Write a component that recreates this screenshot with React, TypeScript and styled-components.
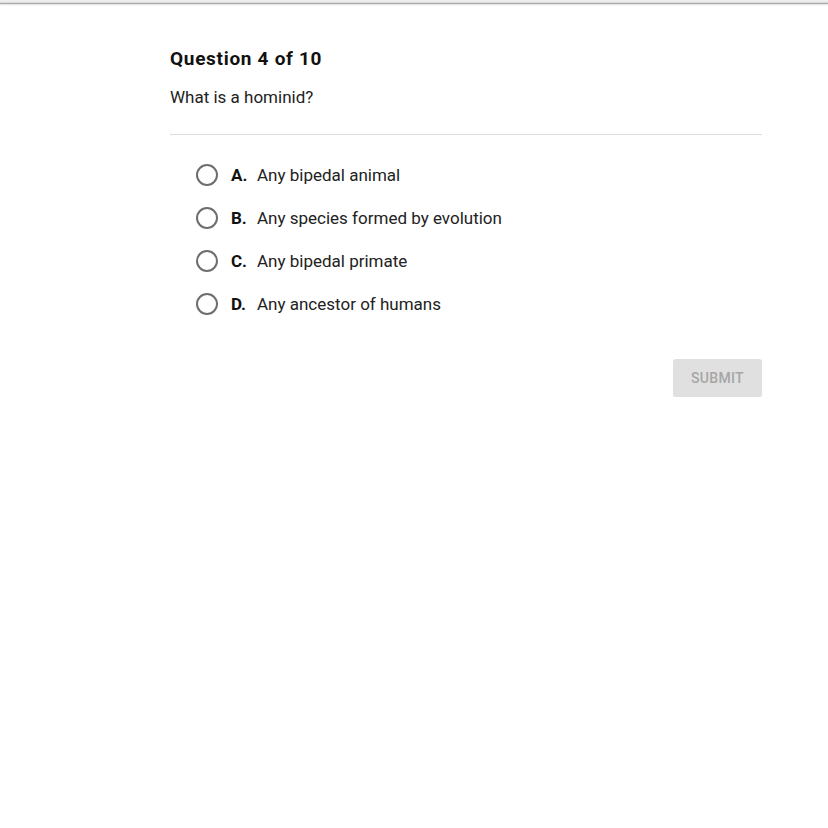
import styled, { createGlobalStyle } from 'styled-components';

const GlobalStyle = createGlobalStyle`
  html, body {
    margin: 0;
    padding: 0;
    background: #ffffff;
    font-family: Roboto, "Liberation Sans", Arial, sans-serif;
    color: #222222;
  }
`;

const STopBar = styled.div`
  height: 3px;
  background: linear-gradient(#f4f4f4, #dcdcdc);
  border-bottom: 1px solid #a8a8a8;
  box-shadow: 0 1px 2px rgba(0, 0, 0, 0.12);
`;

const SPage = styled.main`
  margin: 0 66px 0 170px;
  padding-top: 41px;
  display: flex;
  flex-direction: column;
`;

const STitle = styled.h2`
  margin: 0;
  font-size: 19px;
  font-weight: 700;
  letter-spacing: 0.7px;
  line-height: 28px;
  color: #111111;
`;

const SPrompt = styled.p`
  margin: 12px 0 0;
  font-size: 17px;
  line-height: 24px;
  color: #222222;
`;

const SDivider = styled.hr`
  margin: 25px 0 0;
  border: none;
  border-top: 1px solid #dcdcdc;
`;

const SOptions = styled.ul`
  list-style: none;
  margin: 29px 0 0;
  padding: 0 0 0 26px;
  display: flex;
  flex-direction: column;
  gap: 21px;
`;

const SOption = styled.li`
  display: flex;
  align-items: center;
  height: 22px;
  font-size: 17px;
  color: #222222;
  cursor: pointer;
`;

const SRadio = styled.span`
  width: 18px;
  height: 18px;
  border: 2px solid #6e6e6e;
  border-radius: 50%;
  flex-shrink: 0;
`;

const SLetter = styled.span`
  margin-left: 13px;
  font-weight: 700;
  width: 26px;
  color: #111111;
`;

const SFooter = styled.div`
  display: flex;
  justify-content: flex-end;
  margin-top: 44px;
`;

const SSubmit = styled.button`
  width: 89px;
  height: 38px;
  border: none;
  border-radius: 3px;
  background: #e0e0e0;
  color: #a6a6a6;
  font-family: Roboto, "Liberation Sans", Arial, sans-serif;
  font-size: 14px;
  font-weight: 500;
  letter-spacing: 0.3px;
  text-transform: uppercase;
  box-shadow: 0 1px 1px rgba(0, 0, 0, 0.06);
`;

const options = [
  { letter: 'A.', text: 'Any bipedal animal' },
  { letter: 'B.', text: 'Any species formed by evolution' },
  { letter: 'C.', text: 'Any bipedal primate' },
  { letter: 'D.', text: 'Any ancestor of humans' },
];

const App: React.FC = () => (
  <>
    <GlobalStyle />
    <STopBar />
    <SPage>
      <STitle>Question 4 of 10</STitle>
      <SPrompt>What is a hominid?</SPrompt>
      <SDivider />
      <SOptions>
        {options.map((o) => (
          <SOption key={o.letter}>
            <SRadio />
            <SLetter>{o.letter}</SLetter>
            <span>{o.text}</span>
          </SOption>
        ))}
      </SOptions>
      <SFooter>
        <SSubmit disabled>Submit</SSubmit>
      </SFooter>
    </SPage>
  </>
);

export default App;
